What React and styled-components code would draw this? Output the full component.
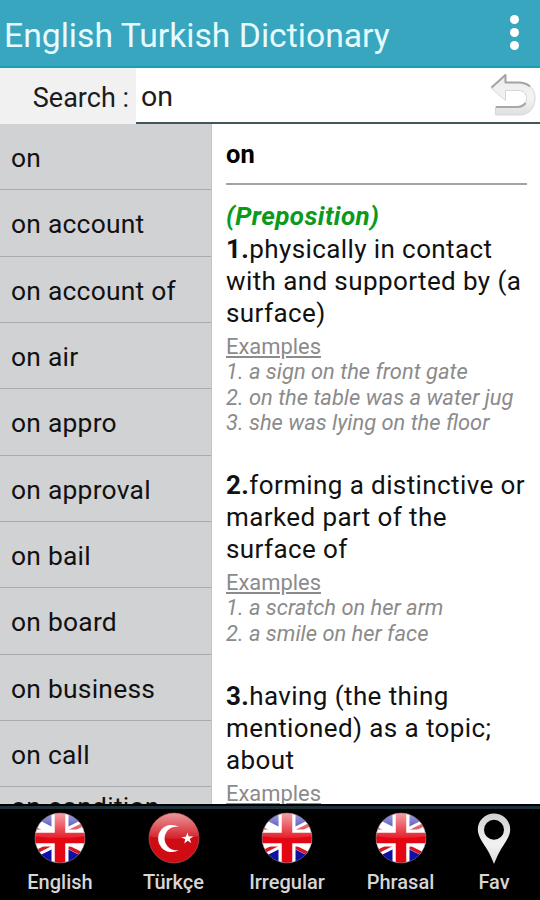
import styled, { createGlobalStyle } from 'styled-components';

const theme = {
  celeste: '#37a6be',
  celesteOscuro: '#179db4',
  grisLista: '#d1d2d4',
  grisLinea: '#a9aaac',
  grisTexto: '#8b8b8b',
  verde: '#0a9a1c',
};

const words = [
  'on',
  'on account',
  'on account of',
  'on air',
  'on appro',
  'on approval',
  'on bail',
  'on board',
  'on business',
  'on call',
  'on condition',
];

const meanings = [
  {
    lines: ['physically in contact', 'with and supported by (a', 'surface)'],
    examples: [
      'a sign on the front gate',
      'on the table was a water jug',
      'she was lying on the floor',
    ],
  },
  {
    lines: ['forming a distinctive or', 'marked part of the', 'surface of'],
    examples: ['a scratch on her arm', 'a smile on her face'],
  },
  {
    lines: ['having (the thing', 'mentioned) as a topic;', 'about'],
    examples: [],
  },
];

const tabs = [
  { label: 'English', icon: 'uk', width: 120 },
  { label: 'Türkçe', icon: 'tr', width: 107 },
  { label: 'Irregular', icon: 'uk', width: 120 },
  { label: 'Phrasal', icon: 'uk', width: 107 },
  { label: 'Fav', icon: 'pin', width: 80 },
];

const FlagUk = ({ id }) => (
  <svg width='52' height='52' viewBox='0 0 52 52'>
    <defs>
      <clipPath id={`${id}-c`}><circle cx='26' cy='26' r='25'/></clipPath>
      <linearGradient id={`${id}-g`} x1='0' y1='0' x2='0' y2='1'>
        <stop offset='0' stopColor='#fff' stopOpacity='.65'/>
        <stop offset='1' stopColor='#fff' stopOpacity='.1'/>
      </linearGradient>
    </defs>
    <g clipPath={`url(#${id}-c)`}>
      <rect width='52' height='52' fill='#0f0fa6'/>
      <path d='M-8 9 L60 43 M60 9 L-8 43' stroke='#fff' strokeWidth='13'/>
      <path d='M-8 12 L26 29 M60 7 L26 24 M-8 45 L26 28 M60 48 L26 31' stroke='#dc1420' strokeWidth='3.4'/>
      <path d='M26 0 V52 M0 26 H52' stroke='#fff' strokeWidth='17'/>
      <path d='M26 0 V52 M0 26 H52' stroke='#e30613' strokeWidth='10.5'/>
      <path d='M0 0 H52 V24 Q26 28 0 24 Z' fill={`url(#${id}-g)`}/>
    </g>
    <circle cx='26' cy='26' r='25' fill='none' stroke='#777' strokeOpacity='.6'/>
  </svg>
);

const FlagTr = () => (
  <svg width='52' height='52' viewBox='0 0 52 52'>
    <defs>
      <clipPath id='tr-c'><circle cx='26' cy='26' r='25'/></clipPath>
      <linearGradient id='tr-g' x1='0' y1='0' x2='0' y2='1'>
        <stop offset='0' stopColor='#fff' stopOpacity='.6'/>
        <stop offset='1' stopColor='#fff' stopOpacity='.08'/>
      </linearGradient>
    </defs>
    <circle cx='26' cy='26' r='25' fill='#cf0c14'/>
    <path d='M0 0 H52 V24 Q26 30 0 24 Z' fill='url(#tr-g)' clipPath='url(#tr-c)'/>
    <path d='M31 15 A13.600 13.600 0 1 0 31 38 A11.800 11.800 0 1 1 31 15 Z' fill='#fff'/>
    <path d='M39.500 20.500 L40.700 24.600 L45.300 24.300 L41.800 26.900 L43.300 31 L39.700 28.800 L36.300 31.400 L37.200 27.300 L33.300 25.300 L37.800 24.700 Z' fill='#fff'/>
    <circle cx='26' cy='26' r='25' fill='none' stroke='#c06060' strokeOpacity='.6'/>
  </svg>
);

const Pin = () => (
  <svg width='34' height='52' viewBox='0 0 34 52'>
    <defs>
      <linearGradient id='pin-g' x1='0' y1='0' x2='0' y2='1'>
        <stop offset='0' stopColor='#d0d0d0'/>
        <stop offset='.6' stopColor='#f2f2f2'/>
        <stop offset='1' stopColor='#dcdcdc'/>
      </linearGradient>
    </defs>
    <path
      fill='url(#pin-g)'
      fillRule='evenodd'
      d='M17 1.5 C8 1.5 .8 8.500 .8 17.500 C.8 25 7 32 11 39 C13.500 43.500 15.500 48 17 52 C18.500 48 20.500 43.500 23 39 C27 32 33.200 25 33.200 17.500 C33.200 8.500 26 1.500 17 1.500 Z M17 7.800 a10 10 0 1 1 0 20 a10 10 0 1 1 0 -20 Z'
    />
  </svg>
);

const BackArrow = () => (
  <svg width='48' height='46' viewBox='0 0 48 46'>
    <defs>
      <linearGradient id='back-g' x1='0' y1='0' x2='0' y2='1'>
        <stop offset='0' stopColor='#ececec'/>
        <stop offset='.6' stopColor='#f3f3f3'/>
        <stop offset='1' stopColor='#dfdfdf'/>
      </linearGradient>
    </defs>
    <path
      d='M2 16 L16.500 2.500 V10.500 H31 C40 10.500 46 17 46 26 C46 36 40 43 31 43 H6.500 V34.500 H29 C34.500 34.500 37.500 31 37.500 26.500 C37.500 22 34.500 18.500 30 18.500 H16.500 V28.500 Z'
      fill='url(#back-g)'
      stroke='#d6d6d6'
      strokeLinejoin='round'
    />
    <path d='M2.500 15.500 L16.500 3 V10.500 H31 Q37 11 41 14.500' fill='none' stroke='#a3a3a3' strokeWidth='2' strokeLinejoin='round'/>
    <path d='M7 35 H29 Q34 34.500 36.500 31' fill='none' stroke='#a8a8a8' strokeWidth='2.2'/>
  </svg>
);

const TabIcon = ({ icon, id }) => {
  if (icon=='tr') return <FlagTr/>;
  if (icon=='pin') return <Pin/>;
  return <FlagUk id={id}/>;
};

export default function App() {
  return (
    <>
      <GlobalStyle/>
      <Screen>
        <Header>
          <Title>English Turkish Dictionary</Title>
          <MenuButton>
            <Dot/>
            <Dot/>
            <Dot/>
          </MenuButton>
        </Header>

        <SearchBar>
          <SearchLabel>Search :</SearchLabel>
          <SearchField>
            <SearchText>on</SearchText>
            <BackArrow/>
          </SearchField>
        </SearchBar>

        <Main>
          <WordList>
            {words.map((word) => <WordRow key={word}>{word}</WordRow>)}
          </WordList>

          <Detail>
            <Headword>on</Headword>
            <WordClass>(Preposition)</WordClass>
            {meanings.map((meaning, index) => (
              <Meaning key={index}>
                {meaning.lines.map((line, i) => (
                  <DefLine key={line}>
                    {i==0 && <b>{index+1}.</b>}
                    {line}
                  </DefLine>
                ))}
                <ExamplesTitle>Examples</ExamplesTitle>
                {meaning.examples.map((example, i) => (
                  <Example key={example}>{i+1}. {example}</Example>
                ))}
              </Meaning>
            ))}
          </Detail>
        </Main>

        <TabBar>
          {tabs.map((tab) => (
            <Tab key={tab.label} $width={tab.width}>
              <TabIcon icon={tab.icon} id={tab.label}/>
              <TabLabel>{tab.label}</TabLabel>
            </Tab>
          ))}
        </TabBar>
      </Screen>
    </>
  );
}

const GlobalStyle = createGlobalStyle`
  *{
    box-sizing: border-box;
  }
  body{
    margin: 0;
    overflow: hidden;
    font-family: Roboto, "Liberation Sans", sans-serif;
  }
`;

const Screen = styled.div`
  width: 540px;
  height: 900px;
  display: flex;
  flex-direction: column;
  background-color: white;
`;

const Header = styled.header`
  height: 68px;
  flex: none;
  display: flex;
  justify-content: space-between;
  padding: 0 21px 0 4px;
  background-color: ${theme.celeste};
  border-bottom: 2px solid ${theme.celesteOscuro};
`;

const Title = styled.h1`
  margin: 0;
  font-size: 33.7px;
  font-weight: 400;
  line-height: 71px;
  color: #e6fbff;
  white-space: nowrap;
`;

const MenuButton = styled.div`
  display: flex;
  flex-direction: column;
  gap: 4px;
  padding-top: 15px;
`;

const Dot = styled.span`
  width: 9px;
  height: 9px;
  border-radius: 50%;
  background-color: white;
`;

const SearchBar = styled.div`
  height: 56px;
  flex: none;
  display: flex;
`;

const SearchLabel = styled.label`
  width: 136px;
  padding-right: 7px;
  background-color: #f1f1f1;
  color: #1c1c1c;
  font-size: 27px;
  line-height: 61px;
  text-align: right;
  white-space: nowrap;
`;

const SearchField = styled.div`
  flex: 1;
  display: flex;
  justify-content: space-between;
  padding: 4px 3px 0 5px;
  border-bottom: 2px solid #43575a;
`;

const SearchText = styled.span`
  font-size: 28.5px;
  line-height: 50px;
  color: #1c1c1c;
`;

const Main = styled.main`
  flex: 1;
  min-height: 0;
  display: flex;
  overflow: hidden;
`;

const WordList = styled.div`
  width: 212px;
  flex: none;
  background-color: ${theme.grisLista};
  border-right: 1px solid #c4c5c7;
`;

const WordRow = styled.div`
  height: 66.35px;
  padding-left: 11px;
  border-bottom: 1.5px solid ${theme.grisLinea};
  font-size: 26.4px;
  letter-spacing: .25px;
  line-height: 69px;
  color: #111;
  white-space: nowrap;
  /* the row that is still scrolling into view */
  &:last-child{
    line-height: 40px;
  }
`;

const Detail = styled.section`
  flex: 1;
  padding: 0 13px 0 14px;
  white-space: nowrap;
`;

const Headword = styled.h2`
  height: 61px;
  margin: 0;
  border-bottom: 2px solid #a3a3a3;
  font-size: 25.5px;
  font-weight: 700;
  line-height: 61px;
  color: #000;
`;

const WordClass = styled.div`
  padding-top: 15px;
  font-size: 26px;
  font-weight: 700;
  font-style: italic;
  letter-spacing: .4px;
  line-height: 33px;
  color: ${theme.verde};
`;

const Meaning = styled.div`
  margin-bottom: 33.4px;
`;

const DefLine = styled.div`
  font-size: 26px;
  letter-spacing: .4px;
  line-height: 32px;
  color: #111;
`;

const ExamplesTitle = styled.div`
  margin-top: 5px;
  font-size: 21.9px;
  line-height: 25.4px;
  text-decoration: underline;
  color: ${theme.grisTexto};
`;

const Example = styled.div`
  font-size: 21.9px;
  font-style: italic;
  line-height: 25.4px;
  color: ${theme.grisTexto};
`;

const TabBar = styled.nav`
  height: 96px;
  flex: none;
  display: flex;
  background: linear-gradient(#000 0 2px, #1c3039 2px 5px, #000 5px);
`;

const Tab = styled.div`
  width: ${({ $width }) => $width}px;
  display: flex;
  flex-direction: column;
  align-items: center;
  padding-top: 8px;
`;

const TabLabel = styled.span`
  margin-top: 6px;
  font-size: 20px;
  font-weight: 500;
  line-height: 25px;
  color: #d6d6d6;
`;
